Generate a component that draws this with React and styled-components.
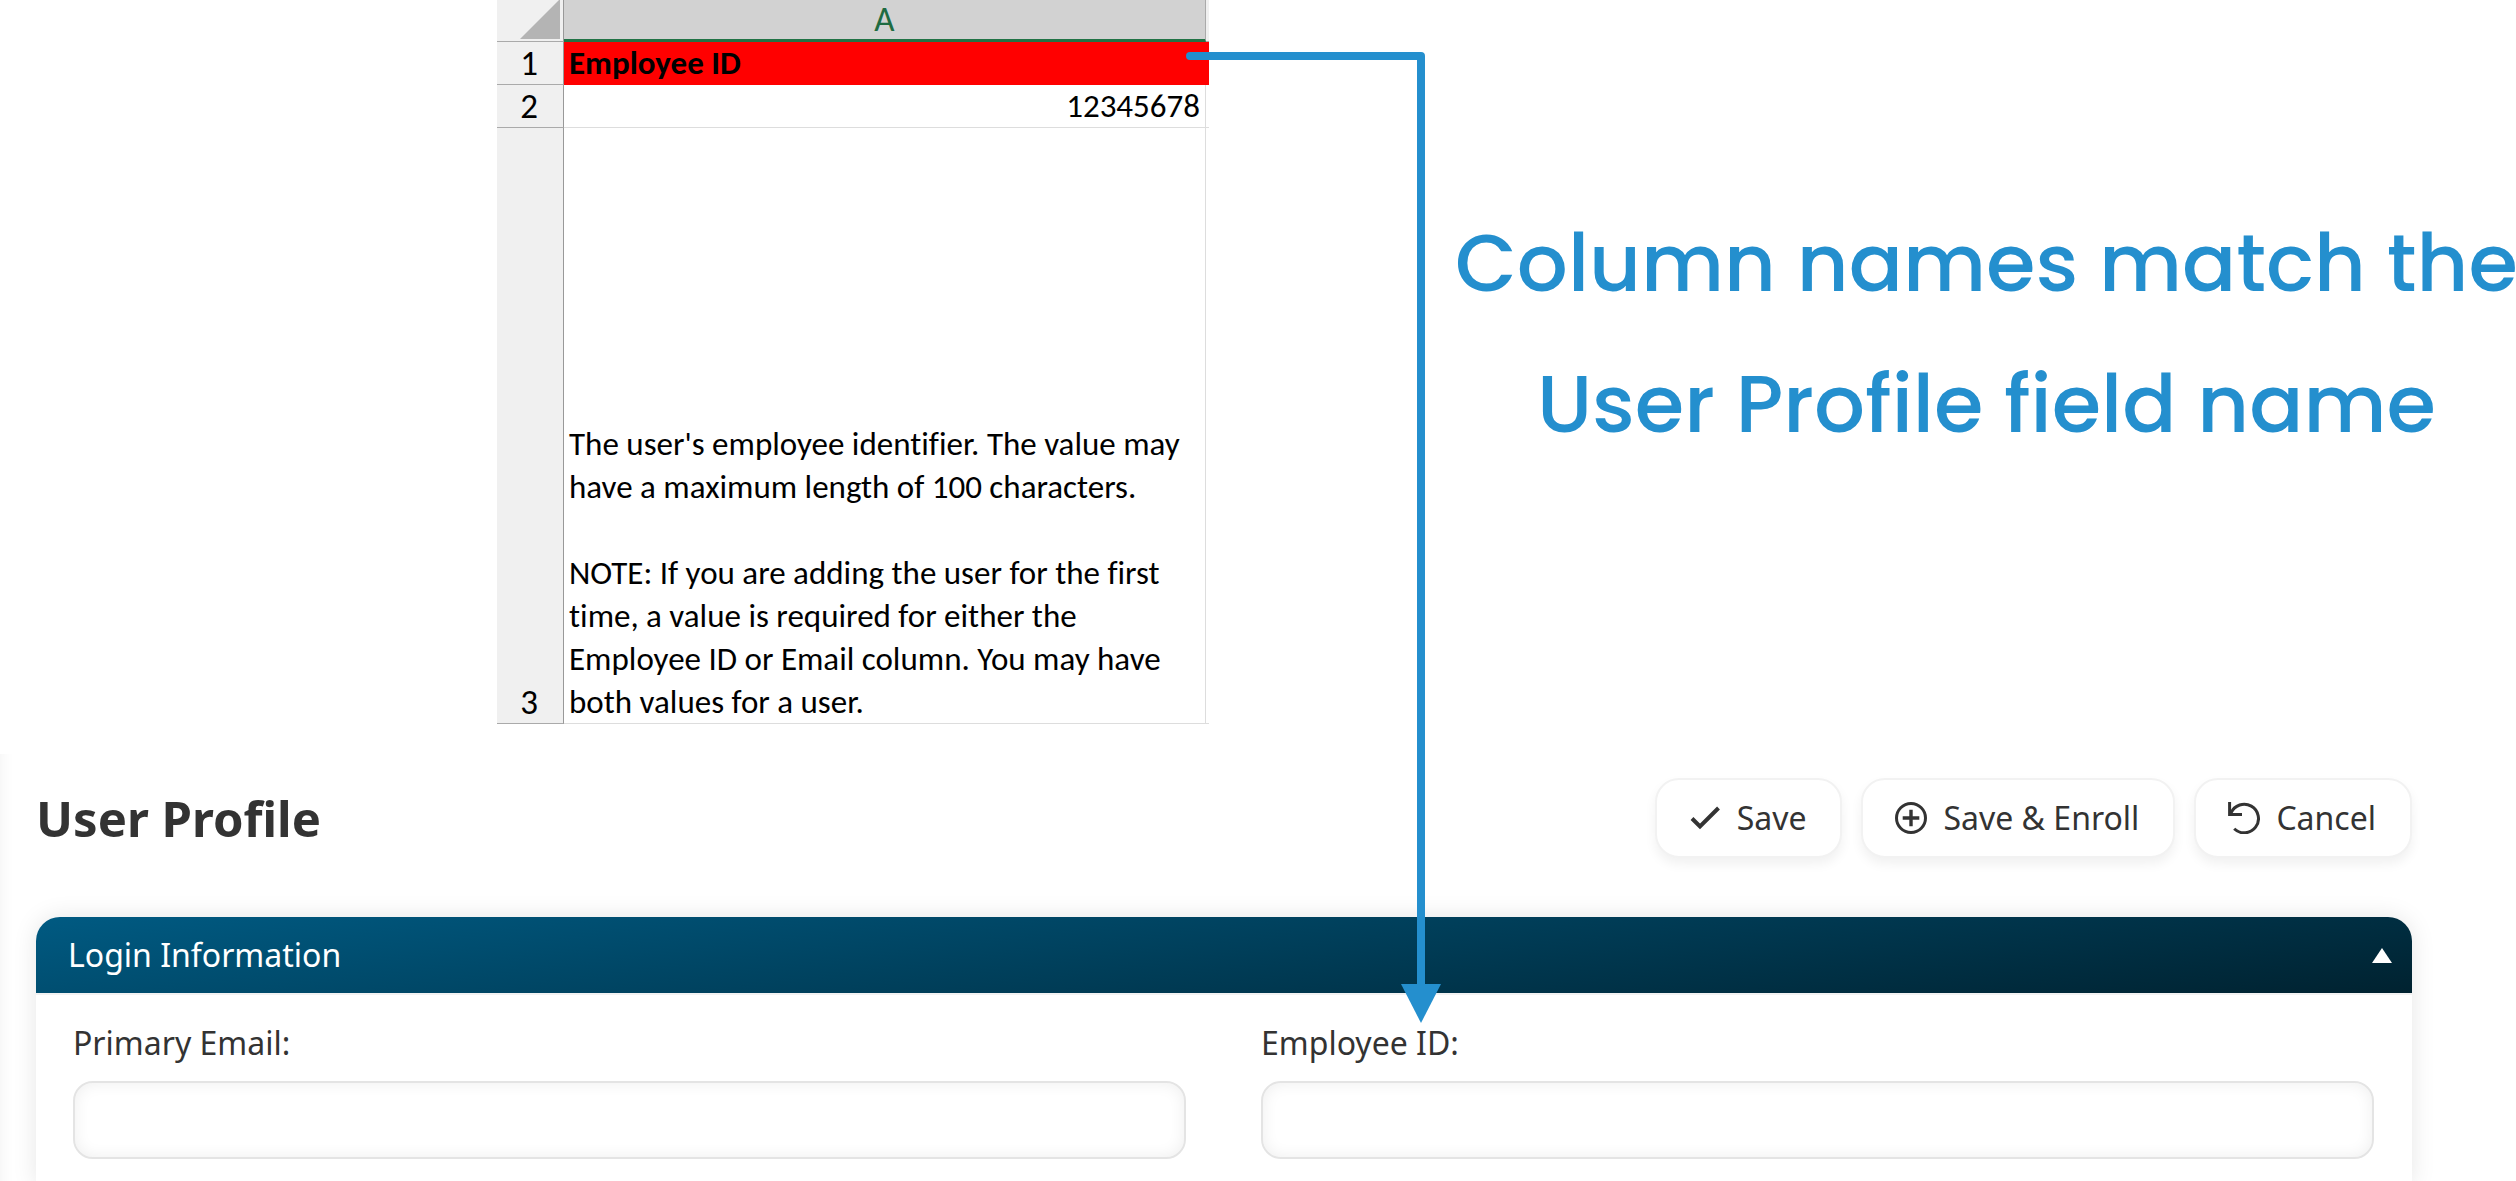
import React from "react"
import styled, { createGlobalStyle } from "styled-components"

const notes = `The user's employee identifier. The value may
have a maximum length of 100 characters.

NOTE: If you are adding the user for the first
time, a value is required for either the
Employee ID or Email column. You may have
both values for a user.`

const CheckIcon = () => (
  <Icon viewBox="0 0 32 32" aria-hidden="true">
    <path d="M3 16.5 L11 24.5 L29.5 6" strokeWidth="4" />
  </Icon>
)

const PlusIcon = () => (
  <Icon viewBox="0 0 32 32" aria-hidden="true">
    <circle cx="16" cy="16" r="14.5" strokeWidth="3" />
    <path d="M16 7.7 V24.3 M7.7 16 H24.3" strokeWidth="3.4" />
  </Icon>
)

const UndoIcon = () => (
  <Icon viewBox="0 0 32 32" aria-hidden="true">
    <path d="M3 11 A14.3 14.3 0 1 1 6.2 26.8" strokeWidth="3" />
    <path d="M1.6 0 V12.4 H14" strokeWidth="3" />
  </Icon>
)

const actions = [
  { label: "Save", icon: CheckIcon },
  { label: "Save & Enroll", icon: PlusIcon },
  { label: "Cancel", icon: UndoIcon },
]

const Sheet = () => (
  <SheetTable>
    <colgroup>
      <col width="67" />
      <col width="642" />
      <col width="3" />
    </colgroup>
    <thead>
      <tr>
        <Corner>
          <svg width="40" height="39" viewBox="0 0 40 39" aria-hidden="true">
            <path d="M0 39 L40 -1 V39 Z" fill="#b4b4b4" />
          </svg>
        </Corner>
        <ColumnHead scope="col">A</ColumnHead>
        <EdgeHead />
      </tr>
    </thead>
    <tbody>
      <tr>
        <RowHead scope="row">1</RowHead>
        <FieldCell colSpan={2}>Employee ID</FieldCell>
      </tr>
      <tr>
        <RowHead scope="row">2</RowHead>
        <Cell $align="right">12345678</Cell>
        <EdgeCell />
      </tr>
      <TallRow>
        <RowHead scope="row">3</RowHead>
        <Cell>{notes}</Cell>
        <EdgeCell />
      </TallRow>
    </tbody>
  </SheetTable>
)

const Field = ({ id, label, type }) => (
  <FieldGroup>
    <label htmlFor={id}>{label}</label>
    <input id={id} type={type} />
  </FieldGroup>
)

const App = () => {
  return (
    <Page>
      <GlobalStyle />
      <Explainer>
        <Sheet />
        <Callout>
          Column names match the
          <br />
          User Profile field name
        </Callout>
      </Explainer>
      <Profile>
        <ProfileBar>
          <h1>User Profile</h1>
          <Actions>
            {actions.map(({ label, icon: ActionIcon }) => (
              <ActionButton type="button" key={label}>
                <ActionIcon />
                {label}
              </ActionButton>
            ))}
          </Actions>
        </ProfileBar>
        <Panel>
          <PanelHeader type="button" aria-expanded="true">
            Login Information
            <svg width="20" height="15" viewBox="0 0 20 15" aria-hidden="true">
              <path d="M10 0 L20 15 H0 Z" fill="#fff" />
            </svg>
          </PanelHeader>
          <Fields>
            <Field id="primary-email" label="Primary Email:" type="email" />
            <Field id="employee-id" label="Employee ID:" type="text" />
          </Fields>
        </Panel>
      </Profile>
      {/* arrow from the red cell down to the matching field */}
      <Connector width="256" height="972" viewBox="0 0 256 972" aria-hidden="true">
        <path
          d="M4 4 H235 V940"
          fill="none"
          stroke="#248fce"
          strokeWidth="8"
          strokeLinecap="round"
          strokeLinejoin="round"
        />
        <path d="M215 932 H255 L235 971 Z" fill="#248fce" />
      </Connector>
    </Page>
  )
}

export default App

const GlobalStyle = createGlobalStyle`
  * {
    box-sizing: border-box;
  }

  body {
    margin: 0;
    background: #fff;
    color: #333;
    font-family: "Noto Sans", sans-serif;
    font-size: 32px;
    line-height: 44px;
  }
`

const Page = styled.main`
  position: relative;
  display: flex;
  flex-direction: column;
  min-height: 100vh;
  overflow: hidden;
`

const Explainer = styled.section`
  display: flex;
  align-items: flex-start;
  padding: 0 0 30px 497px;
`

const SheetTable = styled.table`
  flex: none;
  width: 712px;
  table-layout: fixed;
  border-collapse: separate;
  border-spacing: 0;
  color: #000;
  font-family: Calibri, Carlito, Lato, sans-serif;
  font-size: 33px;
  font-variant-ligatures: none;
  line-height: 43px;

  & th,
  & td {
    padding: 0;
    vertical-align: bottom;
  }
`

const Corner = styled.td`
  height: 42px;
  background: #f0f0f0;
  border-right: 1px solid #999;
  border-bottom: 1px solid #aaa;
  text-align: right;
  line-height: 0;

  & svg {
    display: block;
    margin: 0 3px 2px auto;
  }
`

const ColumnHead = styled.th`
  height: 42px;
  background: #d2d2d2;
  border-right: 1px solid #aaa;
  border-bottom: 3px solid #217346;
  color: #1e6b41;
  font-size: 35px;
  font-weight: 400;
  line-height: 39px;
`

const EdgeHead = styled.td`
  background: #f0f0f0;
  border-bottom: 1px solid #aaa;
`

const RowHead = styled.th`
  height: 43px;
  background: #f0f0f0;
  border-right: 1px solid #999;
  border-bottom: 1px solid #aaa;
  font-size: 35px;
  font-weight: 400;
  line-height: 42px;

  && {
    padding-right: 2px;
  }
`

const Cell = styled.td`
  box-shadow: inset -1px -1px #ddd;
  text-align: ${({ $align }) => $align || "left"};
  white-space: pre-line;

  && {
    padding: 0 6px 0 5px;
  }
`

const FieldCell = styled(Cell)`
  background: #f00;
  box-shadow: none;
  font-weight: 700;
`

const EdgeCell = styled.td`
  box-shadow: inset 0 -1px #ddd;
`

const TallRow = styled.tr`
  height: 596px;
`

const Callout = styled.p`
  flex: 1;
  margin: 193px 0 0 246px;
  color: #248fce;
  font-family: Poppins, Inter, sans-serif;
  font-size: 80px;
  font-weight: 500;
  line-height: 141px;
  text-align: center;
  white-space: nowrap;
`

const Profile = styled.section`
  flex: 1;
  display: flex;
  flex-direction: column;
  padding: 24px 104px 0 36px;
  background: #fff;
  box-shadow: inset 16px 0 16px -16px rgba(0, 0, 0, 0.06);
`

const ProfileBar = styled.header`
  display: flex;
  align-items: center;
  justify-content: space-between;
  margin-bottom: 59px;

  & h1 {
    margin: 0;
    font-size: 49px;
    font-weight: 700;
    line-height: 64px;
  }
`

const Actions = styled.div`
  display: flex;
  gap: 19px;
`

const ActionButton = styled.button`
  display: flex;
  align-items: center;
  gap: 16px;
  height: 80px;
  padding: 0 34px 0 32px;
  background: #fff;
  border: 2px solid #f2f2f2;
  border-radius: 24px;
  box-shadow: 0 6px 12px rgba(0, 0, 0, 0.06);
  color: #333;
  font: inherit;
  cursor: pointer;
`

const Icon = styled.svg`
  width: 32px;
  height: 32px;
  fill: none;
  stroke: #333;
`

const Panel = styled.section`
  flex: 1;
  background: #fff;
  border-radius: 24px 24px 0 0;
  box-shadow: 0 0 24px rgba(0, 0, 0, 0.1);
`

const PanelHeader = styled.button`
  display: flex;
  align-items: center;
  justify-content: space-between;
  width: 100%;
  height: 76px;
  padding: 0 20px 0 32px;
  background: linear-gradient(173deg, #005a82, #002230);
  border: none;
  border-radius: 24px 24px 0 0;
  color: #fff;
  font: inherit;
  cursor: pointer;
`

const Fields = styled.div`
  display: grid;
  grid-template-columns: 1fr 1fr;
  gap: 75px;
  padding: 26px 38px 26px 37px;
  border-top: 2px solid #f2f2f2;
`

const FieldGroup = styled.div`
  display: flex;
  flex-direction: column;
  gap: 16px;

  & input {
    width: 100%;
    height: 78px;
    padding: 0 20px;
    background: #fff;
    border: 2px solid #e4e4e4;
    border-radius: 20px;
    box-shadow: inset 0 0 16px rgba(0, 0, 0, 0.07);
    color: inherit;
    font: inherit;
  }
`

const Connector = styled.svg`
  position: absolute;
  top: 52px;
  left: 1186px;
  pointer-events: none;
`
